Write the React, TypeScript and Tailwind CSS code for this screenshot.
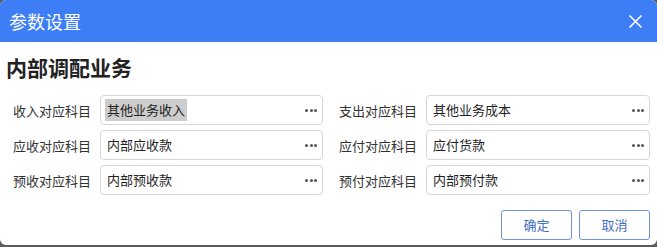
import React from "react"

type Field = {
  label: string
  value: string
  selected?: boolean
}

const rows: [Field, Field][] = [
  [
    { label: "收入对应科目", value: "其他业务收入", selected: true },
    { label: "支出对应科目", value: "其他业务成本" },
  ],
  [
    { label: "应收对应科目", value: "内部应收款" },
    { label: "应付对应科目", value: "应付货款" },
  ],
  [
    { label: "预收对应科目", value: "内部预收款" },
    { label: "预付对应科目", value: "内部预付款" },
  ],
]

function Dots() {
  return (
    <div className="flex items-center gap-[1.5px] mr-[5px]">
      <span className="h-[3px] w-[3px] rounded-full bg-[#555]" />
      <span className="h-[3px] w-[3px] rounded-full bg-[#555]" />
      <span className="h-[3px] w-[3px] rounded-full bg-[#555]" />
    </div>
  )
}

function PickerField({ field, wide }: { field: Field; wide?: boolean }) {
  return (
    <div className="flex items-center">
      <div className="w-[87px] text-[13px] text-[#333] leading-none">{field.label}</div>
      <div
        className={`flex h-[30px] items-center justify-between rounded-[4px] border border-[#d6d6d6] bg-white pl-[4px] ${
          wide ? "w-[224px]" : "w-[223px]"
        }`}
      >
        <span
          className={`px-[2px] text-[13px] leading-[22px] text-[#1f1f1f] ${field.selected ? "bg-[#cdcdcd]" : ""}`}
        >
          {field.value}
        </span>
        <Dots />
      </div>
    </div>
  )
}

export default function App() {
  return (
    <div
      className="h-[247px] w-[657px] bg-[#5b5b5b]"
      style={{ fontFamily: '"Noto Sans CJK SC", "Noto Sans", sans-serif' }}
    >
      <div className="flex h-[245px] flex-col overflow-hidden rounded-[6px] bg-white">
        <div className="flex h-[42px] shrink-0 items-center justify-between bg-[#3d7ef6] pl-[9px] pr-[14px]">
          <span className="text-[18px] leading-none text-white">参数设置</span>
          <svg width="15" height="15" viewBox="0 0 15 15" fill="none" stroke="white" strokeWidth="1.6">
            <path d="M1.5 1.5 L13.5 13.5 M13.5 1.5 L1.5 13.5" />
          </svg>
        </div>

        <div className="pl-[6px] pt-[11px] text-[21px] font-bold leading-[28px] text-[#222]">内部调配业务</div>

        <div className="mt-[14px] flex flex-col gap-[5px] pl-[13px]">
          {rows.map(([left, right], i) => (
            <div key={i} className="flex gap-[16px]">
              <PickerField field={left} />
              <PickerField field={right} wide />
            </div>
          ))}
        </div>

        <div className="mt-[15px] flex justify-end gap-[7px] pr-[7px]">
          <button className="h-[30px] w-[71px] rounded-[3px] border border-[#6b95d6] text-[13px] text-[#3f6fc2]">
            确定
          </button>
          <button className="h-[30px] w-[71px] rounded-[3px] border border-[#6b95d6] text-[13px] text-[#3f6fc2]">
            取消
          </button>
        </div>
      </div>
    </div>
  )
}
